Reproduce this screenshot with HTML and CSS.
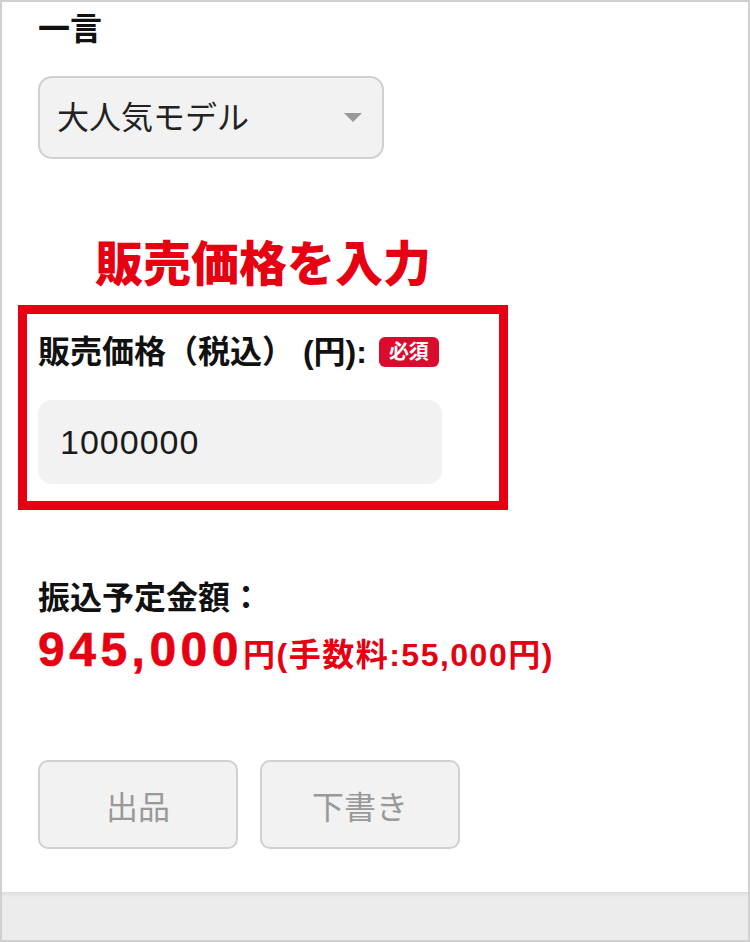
FILE: index.html
```html
<!DOCTYPE html>
<html lang="ja">
<head>
    <meta charset="UTF-8">
    <meta name="viewport" content="width=device-width, initial-scale=1.0">
    <title>出品フォーム</title>
    <link rel="stylesheet" href="styles.css">
</head>
<body>
<div class="frame">
    <div class="content">
        <p class="field-label">一言</p>
        <div class="select-box">
            <span>大人気モデル</span>
            <span class="arrow"></span>
        </div>

        <p class="note">販売価格を入力</p>
        <div class="price-box">
            <p class="field-label price-label">販売価格（税込） (円): <span class="required">必須</span></p>
            <div class="text-input">1000000</div>
        </div>

        <p class="field-label transfer-label">振込予定金額：</p>
        <p class="transfer"><span class="transfer-amount">945,000</span>円(手数料:55,000円)</p>

        <div class="buttons">
            <button class="action-btn">出品</button>
            <button class="action-btn">下書き</button>
        </div>
    </div>
    <div class="footer"></div>
</div>
</body>
</html>
```

FILE: styles.css
```css
body{
    margin: 0;
    background-color: white;
    font-family: "Liberation Sans", "Noto Sans CJK JP", sans-serif;
    color: #111;
}
.frame{
    height: 942px;
    box-sizing: border-box;
    border: 2px solid #d0d0d0;
    display: flex;
    flex-direction: column;
}
.content{
    flex: 1;
    padding: 7px 0 0 36px;
}
.field-label{
    margin: 0;
    font-size: 32px;
    font-weight: bold;
    line-height: 40px;
}
.select-box{
    margin-top: 27px;
    width: 346px;
    height: 83px;
    box-sizing: border-box;
    border: 2px solid #d0d0d0;
    border-radius: 14px;
    background-color: #f2f2f2;
    display: flex;
    align-items: center;
    justify-content: space-between;
    padding: 0 20px 6px 17px;
    font-size: 32px;
    color: #222;
}
.arrow{
    width: 0;
    height: 0;
    margin-top: 6px;
    border-left: 9px solid transparent;
    border-right: 9px solid transparent;
    border-top: 9px solid #999;
}
.note{
    margin: 76px 0 0 -20px;
    width: 490px;
    text-align: center;
    font-size: 48px;
    font-weight: 900;
    line-height: 60px;
    color: #e60012;
}
.price-box{
    margin: 10px 0 0 -20px;
    width: 490px;
    box-sizing: border-box;
    border: 9px solid #e60012;
    padding: 18px 0 17px 11px;
}
.price-label{
    display: flex;
    align-items: center;
}
.required{
    margin-left: 12px;
    width: 60px;
    height: 30px;
    border-radius: 6px;
    background-color: #dc0a2d;
    color: white;
    font-size: 20px;
    line-height: 30px;
    text-align: center;
}
.text-input{
    margin-top: 28px;
    width: 404px;
    height: 84px;
    box-sizing: border-box;
    border-radius: 14px;
    background-color: #f2f2f2;
    padding: 0 22px;
    display: flex;
    align-items: center;
    font-size: 34px;
    letter-spacing: 1px;
    color: #1a1a1a;
}
.transfer-label{
    margin-top: 68px;
}
.transfer{
    margin: 4px 0 0;
    font-size: 32px;
    font-weight: bold;
    line-height: 56px;
    color: #e60012;
    letter-spacing: 1.5px;
}
.transfer-amount{
    font-size: 48px;
    letter-spacing: 4.5px;
    -webkit-text-stroke: 0.6px #e60012;
}
.buttons{
    margin-top: 77px;
    display: flex;
    gap: 22px;
}
.action-btn{
    width: 200px;
    height: 89px;
    border: 2px solid #d0d0d0;
    border-radius: 10px;
    background-color: #f2f2f2;
    color: #999;
    font-family: inherit;
    font-size: 32px;
}
.footer{
    height: 48px;
    background-color: #ececec;
    box-shadow: inset 0 5px 4px -3px rgba(0, 0, 0, 0.08);
}
```
